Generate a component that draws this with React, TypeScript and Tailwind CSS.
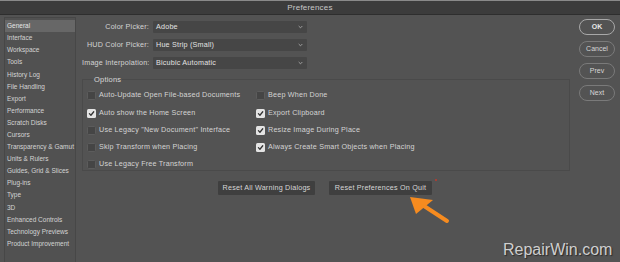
import React from 'react';

const sections = [
  'General',
  'Interface',
  'Workspace',
  'Tools',
  'History Log',
  'File Handling',
  'Export',
  'Performance',
  'Scratch Disks',
  'Cursors',
  'Transparency & Gamut',
  'Units & Rulers',
  'Guides, Grid & Slices',
  'Plug-ins',
  'Type',
  '3D',
  'Enhanced Controls',
  'Technology Previews',
  'Product Improvement',
];

const pickers = [
  { label: 'Color Picker:', value: 'Adobe' },
  { label: 'HUD Color Picker:', value: 'Hue Strip (Small)' },
  { label: 'Image Interpolation:', value: 'Bicubic Automatic' },
];

const options: [string, boolean, string | null, boolean][] = [
  ['Auto-Update Open File-based Documents', false, 'Beep When Done', false],
  ['Auto show the Home Screen', true, 'Export Clipboard', true],
  ['Use Legacy "New Document" Interface', false, 'Resize Image During Place', true],
  ['Skip Transform when Placing', false, 'Always Create Smart Objects when Placing', true],
  ['Use Legacy Free Transform', false, null, false],
];

function Check({ on, label }: { on: boolean; label: string }) {
  return (
    <div className="flex items-center gap-[3px] h-[9px]">
      <span
        className={
          on
            ? 'flex h-[9px] w-[9px] items-center justify-center rounded-[1.5px] bg-[#e4e4e4]'
            : 'h-[9px] w-[9px] rounded-[1.5px] border border-[#5c5c5c] bg-[#454545]'
        }
      >
        {on && (
          <svg width="7" height="7" viewBox="0 0 10 10">
            <path d="M2 5.2 L4.2 7.5 L8.2 2.5" fill="none" stroke="#333" strokeWidth="1.8" strokeLinecap="round" strokeLinejoin="round" />
          </svg>
        )}
      </span>
      <span className="whitespace-nowrap">{label}</span>
    </div>
  );
}

export default function App() {
  return (
    <div
      className="relative h-[262px] w-[620px] overflow-hidden bg-[#535353] text-[7.2px] text-[#d4d4d4]"
      style={{ fontFamily: '"Liberation Sans", Arial, sans-serif' }}
    >
      <div className="flex h-[15px] items-center justify-center border-t border-[#8a8a8a] border-b border-b-[#2e2e2e] bg-[#3c3c3c] text-[8px] tracking-[0.2px] text-[#c8c8c8]">
        Preferences
      </div>

      <div className="flex h-[247px]">
        <div className="ml-[4px] mt-[2px] w-[72px] shrink-0 border-l border-t border-r border-[#474747] bg-[#515151] pt-[2px] text-[6.5px]">
          {sections.map((s, i) => (
            <div
              key={s}
              className={
                i === 0
                  ? 'flex h-[12.1px] items-center whitespace-nowrap bg-[#676767] pl-[2px] text-[#e6e6e6]'
                  : 'flex h-[12.1px] items-center whitespace-nowrap pl-[2px]'
              }
            >
              {s}
            </div>
          ))}
        </div>

        <div className="ml-[6px] mt-[6px] flex w-[488px] flex-col tracking-[0.2px]">
          <div className="flex flex-col gap-[6px]">
            {pickers.map((p) => (
              <div key={p.label} className="flex h-[12px] items-center">
                <div className="w-[69px] pr-[2px] text-right whitespace-nowrap">{p.label}</div>
                <div className="ml-[2px] flex h-[12px] w-[154px] items-center justify-between rounded-[1px] bg-[#464646] pl-[3px] pr-[4px] text-[#e2e2e2]">
                  <span>{p.value}</span>
                  <svg width="5" height="4" viewBox="0 0 6 4">
                    <path d="M0.8 0.8 L3 3 L5.2 0.8" fill="none" stroke="#bdbdbd" strokeWidth="0.9" />
                  </svg>
                </div>
              </div>
            ))}
          </div>

          <fieldset className="mt-[5px] h-[97px] border border-[#4a4a4a] px-[4px] pt-[6px]">
            <legend className="ml-[6px] px-[1px] text-[7.5px] text-[#d8d8d8]">Options</legend>
            <div className="flex flex-col gap-[8.25px]">
              {options.map(([a, aOn, b, bOn]) => (
                <div key={a} className="flex">
                  <div className="w-[169px]">
                    <Check on={aOn} label={a} />
                  </div>
                  {b && <Check on={bOn} label={b} />}
                </div>
              ))}
            </div>
          </fieldset>

          <div className="mt-[10px] flex gap-[14px] pl-[136px]">
            <button className="h-[14px] w-[97px] rounded-[1px] bg-[#3f3f3f] text-[#d6d6d6]">
              Reset All Warning Dialogs
            </button>
            <button className="h-[14px] w-[103px] rounded-[1px] bg-[#3f3f3f] text-[#d6d6d6]">
              Reset Preferences On Quit
            </button>
          </div>
        </div>

        <div className="ml-[9px] mt-[4px] flex flex-col gap-[6px]">
          {['OK', 'Cancel', 'Prev', 'Next'].map((b, i) => (
            <button
              key={b}
              className={
                i === 0
                  ? 'h-[16px] w-[36px] rounded-full border border-[#a8a8a8] text-[7px] font-bold text-[#e6e6e6]'
                  : 'h-[16px] w-[36px] rounded-full border border-[#7a7a7a] text-[7px] text-[#d6d6d6]'
              }
            >
              {b}
            </button>
          ))}
        </div>
      </div>

      <span className="absolute left-[435px] top-[179px] h-[1.5px] w-[1.5px] rounded-full bg-[#c0392b]" />

      <svg className="absolute left-0 top-0" width="620" height="262" viewBox="0 0 620 262">
        <line x1="447" y1="221" x2="421" y2="204" stroke="#f68b1f" strokeWidth="4" strokeLinecap="round" />
        <polygon points="410,197 433,200 416,214" fill="#f68b1f" />
      </svg>

      <div
        className="absolute left-[503px] top-[238px] text-[16px] text-[#cfcfcf]"
        style={{ textShadow: '1px 1px 1px #2a2a2a' }}
      >
        RepairWin.com
      </div>
    </div>
  );
}
